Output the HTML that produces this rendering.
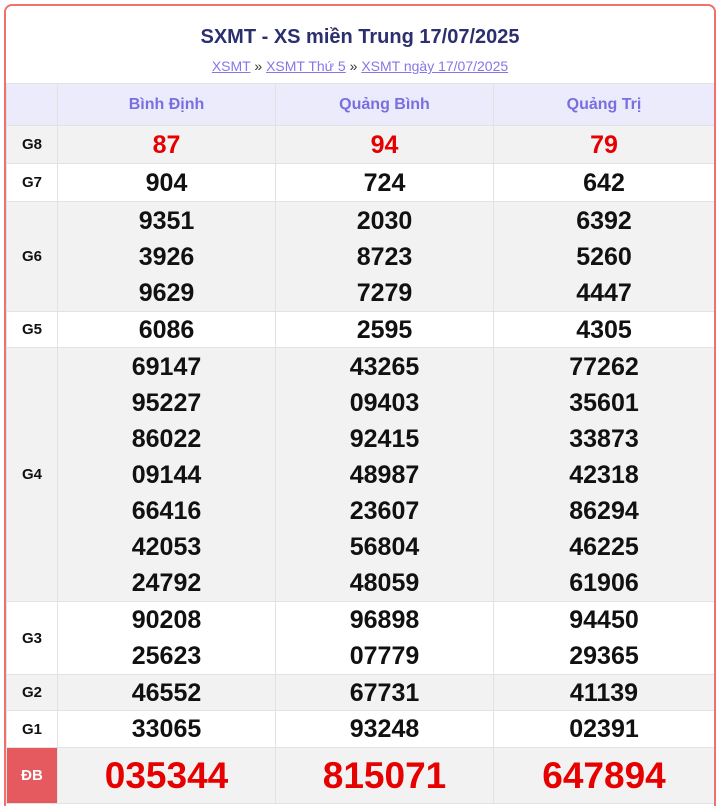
<!DOCTYPE html>
<html><head><meta charset="utf-8"><style>
html,body{margin:0;background:#fff;font-family:"Liberation Sans",Arial,sans-serif;height:806px;overflow:hidden;}
.box{position:absolute;left:4px;top:4px;width:708px;height:800px;border:2px solid #f07070;border-bottom:none;border-radius:8px 8px 0 0;overflow:hidden;}
.title{position:absolute;left:0;width:708px;top:20px;text-align:center;font-weight:bold;font-size:20px;color:#2c2f6e;}
.links{position:absolute;left:0;width:708px;top:52px;text-align:center;font-size:14px;color:#333;}
.links a{color:#8577e6;text-decoration:underline;}
table{position:absolute;left:0;top:77px;border-collapse:collapse;width:708px;table-layout:fixed;}
td{border:1px solid #e2e2e2;text-align:center;padding:0;}
tr.h td{background:#ebebfb;color:#7a6ee0;font-size:16px;font-weight:bold;height:41px;}
.l{font-weight:bold;font-size:15px;color:#111;}
.g{background:#f2f2f2;}
.n{font-weight:bold;font-size:25px;color:#111;line-height:36px;}
.s{line-height:30px;}
.r{color:#e60000;}
.db{background:#e45a5e;color:#fff;font-weight:bold;font-size:15px;}
.big{font-weight:bold;font-size:37px;color:#e60000;line-height:40px;}
</style></head><body>
<div class="box">
<div class="title">SXMT - XS miền Trung 17/07/2025</div>
<div class="links"><a>XSMT</a> » <a>XSMT Thứ 5</a> » <a>XSMT ngày 17/07/2025</a></div>
<table>
<col style="width:51px"><col style="width:218px"><col style="width:218px"><col style="width:221px">
<tr class="h"><td></td><td>Bình Định</td><td>Quảng Bình</td><td>Quảng Trị</td></tr>
<tr class="g" style="height:38px"><td class="l">G8</td><td class="n s r">87</td><td class="n s r">94</td><td class="n s r">79</td></tr>
<tr style="height:38px"><td class="l">G7</td><td class="n s">904</td><td class="n s">724</td><td class="n s">642</td></tr>
<tr class="g" style="height:110px"><td class="l">G6</td><td class="n">9351<br>3926<br>9629</td><td class="n">2030<br>8723<br>7279</td><td class="n">6392<br>5260<br>4447</td></tr>
<tr style="height:36px"><td class="l">G5</td><td class="n s">6086</td><td class="n s">2595</td><td class="n s">4305</td></tr>
<tr class="g" style="height:254px"><td class="l">G4</td><td class="n">69147<br>95227<br>86022<br>09144<br>66416<br>42053<br>24792</td><td class="n">43265<br>09403<br>92415<br>48987<br>23607<br>56804<br>48059</td><td class="n">77262<br>35601<br>33873<br>42318<br>86294<br>46225<br>61906</td></tr>
<tr style="height:73px"><td class="l">G3</td><td class="n">90208<br>25623</td><td class="n">96898<br>07779</td><td class="n">94450<br>29365</td></tr>
<tr class="g" style="height:36px"><td class="l">G2</td><td class="n s">46552</td><td class="n s">67731</td><td class="n s">41139</td></tr>
<tr style="height:37px"><td class="l">G1</td><td class="n s">33065</td><td class="n s">93248</td><td class="n s">02391</td></tr>
<tr class="g" style="height:56px"><td class="db">ĐB</td><td class="big">035344</td><td class="big">815071</td><td class="big">647894</td></tr>
</table>
</div>
</body></html>
